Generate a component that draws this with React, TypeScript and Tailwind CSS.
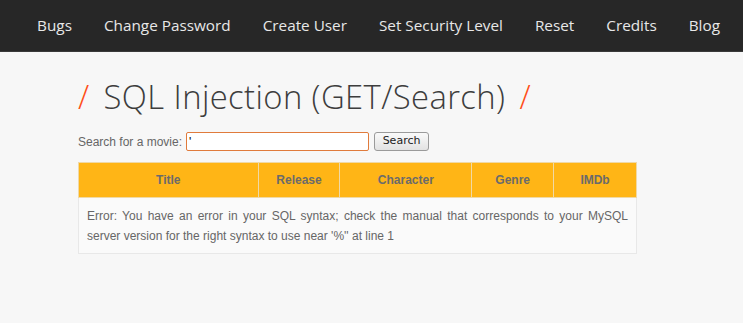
import React from 'react';

const navItems = ['Bugs', 'Change Password', 'Create User', 'Set Security Level', 'Reset', 'Credits', 'Blog'];
const columns = [
  { name: 'Title', w: 'w-[180px]' },
  { name: 'Release', w: 'w-[82px]' },
  { name: 'Character', w: 'w-[132px]' },
  { name: 'Genre', w: 'w-[82px]' },
  { name: 'IMDb', w: 'w-[83px]' },
];

const App: React.FC = () => {
  return (
    <div className="min-h-[323px] bg-[#f7f7f7]">
      {/* Top menu */}
      <nav className="h-[52px] bg-[#272727] border-b border-[#3a3a3a] flex items-center justify-end pr-[23px]">
        <ul className="flex gap-[32px] font-['Open_Sans',sans-serif] text-[15.3px] text-[#e8e8e8] -mt-[1px]">
          {navItems.map((item) => (
            <li key={item}>{item}</li>
          ))}
        </ul>
      </nav>

      <div className="pl-[78px] pt-[27px]">
        <h1 className="font-['Open_Sans',sans-serif] font-light text-[32.8px] leading-[40px] text-[#3d3d3d] tracking-[0.4px] -mt-[2px]">
          <span className="text-[#ff4e17] mr-[14px]">/</span>SQL Injection (GET/Search)<span className="text-[#ff4e17] ml-[14px]">/</span>
        </h1>

        {/* Search form */}
        <form className="mt-[15px] flex items-center font-['Liberation_Sans',Arial,sans-serif] text-[12px] text-[#666]">
          <label htmlFor="title" className="mr-[4px]">Search for a movie:</label>
          <input
            id="title"
            type="text"
            defaultValue="'"
            className="w-[183px] h-[19px] bg-white border border-[#e07b3c] rounded-[2px] px-[2px] text-[12px] text-black outline-none"
          />
          <button
            type="button"
            className="ml-[5px] h-[19px] w-[55px] border border-[#9a9a9a] rounded-[3px] bg-gradient-to-b from-[#fafafa] to-[#e2e2e2] font-['DejaVu_Sans',sans-serif] text-[11px] text-[#222]"
          >
            Search
          </button>
        </form>

        {/* Results table */}
        <table className="mt-[11px] w-[559px] border-collapse font-['Liberation_Sans',Arial,sans-serif] text-[12px]">
          <thead>
            <tr className="bg-[#ffb516] h-[35px]">
              {columns.map((c) => (
                <th key={c.name} className={`${c.w} border border-[#f0d9a6] font-bold text-[#6b6b6b] text-center`}>
                  {c.name}
                </th>
              ))}
            </tr>
          </thead>
          <tbody>
            <tr className="bg-[#fafafa]">
              <td colSpan={5} className="border border-[#e8e8e8] px-[8px] pt-[8px] pb-[7px] text-[#666] leading-[20px] text-justify">
                Error: You have an error in your SQL syntax; check the manual that corresponds to your MySQL server version for the right syntax to use near '%'' at line 1
              </td>
            </tr>
          </tbody>
        </table>
      </div>
    </div>
  );
};

export default App;
